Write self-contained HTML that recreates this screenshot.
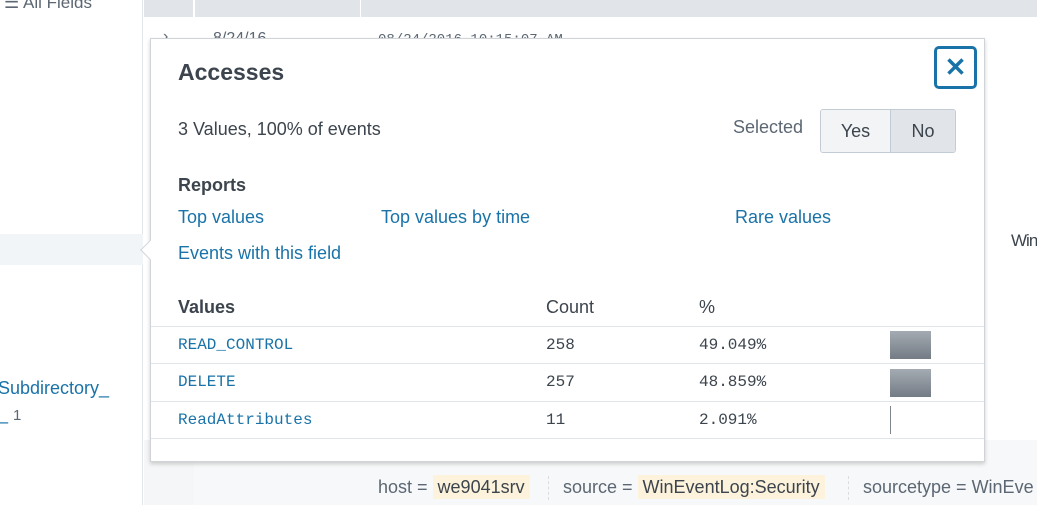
<!DOCTYPE html>
<html><head><style>
*{margin:0;padding:0;box-sizing:border-box}
body{width:1037px;height:505px;overflow:hidden;background:#fff;font-family:"Liberation Sans",sans-serif;position:relative;color:#3c444d}
.a{position:absolute;white-space:nowrap}
.mono{font-family:"Liberation Mono",monospace}
.link{color:#1a73a8}
.t{font-size:18px}
</style></head><body>
<div class="a" style="left:0;top:0;width:143px;height:505px;background:#fff;border-right:1px solid #e1e6eb"></div>
<div class="a" style="left:0;top:234px;width:143px;height:31px;background:#f2f5f7"></div>
<div class="a" style="left:4px;top:-7px;font-size:17px;color:#5c6773">☰ All Fields</div>
<div class="a link" style="left:-2px;top:378px;font-size:18px">Subdirectory_</div>
<div class="a" style="left:-2px;top:404px;font-size:18px;color:#1a73a8">_ <span style="color:#5c6773;font-size:15px">1</span></div>
<div class="a" style="left:144px;top:0;width:893px;height:17px;background:#e1e4e8"></div>
<div class="a" style="left:193px;top:0;width:2px;height:17px;background:#fff"></div>
<div class="a" style="left:360px;top:0;width:1px;height:17px;background:#fff"></div>
<div class="a" style="left:144px;top:440px;width:50px;height:65px;background:#f5f6f7"></div>
<div class="a" style="left:194px;top:440px;width:843px;height:65px;background:#f7f8f9"></div>
<div class="a" style="left:163px;top:28px;font-size:16px;color:#5c6773">›</div>
<div class="a" style="left:213px;top:30px;font-size:16px;color:#5c6773">8/24/16</div>
<div class="a mono" style="left:378px;top:32px;font-size:14px;color:#5c6773">08/24/2016 10:15:07 AM</div>
<div class="a" style="left:1011px;top:231px;font-size:17px;letter-spacing:-1px;color:#3c444d">WinEve</div>
<div class="a" style="left:378px;top:477px;font-size:18px;color:#5c6773">host = <span style="background:#fdf3dc;padding:2px 5px;color:#3c444d">we9041srv</span></div>
<div class="a" style="left:548px;top:476px;width:1px;height:24px;border-left:1px dashed #ddd"></div>
<div class="a" style="left:563px;top:477px;font-size:18px;color:#5c6773">source = <span style="background:#fdf3dc;padding:2px 5px;color:#3c444d">WinEventLog:Security</span></div>
<div class="a" style="left:848px;top:476px;width:1px;height:24px;border-left:1px dashed #ddd"></div>
<div class="a" style="left:863px;top:477px;font-size:18px;color:#5c6773">sourcetype = WinEve</div>
<div class="a" style="left:150px;top:38px;width:835px;height:424px;background:#fff;border:1px solid #d0d4d8;box-shadow:0 2px 4px rgba(0,0,0,.18)"></div>
<div class="a" style="left:143px;top:243px;width:14px;height:14px;background:#fff;border-left:1px solid #d0d4d8;border-bottom:1px solid #d0d4d8;transform:rotate(45deg)"></div>
<div class="a" style="left:178px;top:59px;font-size:23px;font-weight:bold;color:#3c444d">Accesses</div>
<div class="a" style="left:934px;top:46px;width:43px;height:43px;border:3px solid #1a73a8;border-radius:5px;text-align:center;line-height:36px;font-size:26px;color:#1a73a8;font-weight:bold">✕</div>
<div class="a t" style="left:178px;top:119px">3 Values, 100% of events</div>
<div class="a t" style="left:733px;top:117px;color:#5c6773">Selected</div>
<div class="a" style="left:820px;top:109px;width:136px;height:44px;border:1px solid #c3cbd4;border-radius:3px;overflow:hidden;display:flex;font-size:18px">
 <div style="width:70px;background:#f2f4f5;text-align:center;line-height:42px;border-right:1px solid #c3cbd4;color:#3c444d">Yes</div>
 <div style="flex:1;background:#e1e4e8;text-align:center;line-height:42px;color:#3c444d">No</div>
</div>
<div class="a t" style="left:178px;top:175px;font-weight:bold">Reports</div>
<div class="a link t" style="left:178px;top:207px">Top values</div>
<div class="a link t" style="left:381px;top:207px">Top values by time</div>
<div class="a link t" style="left:735px;top:207px">Rare values</div>
<div class="a link t" style="left:178px;top:243px">Events with this field</div>
<div class="a t" style="left:178px;top:297px;font-weight:bold">Values</div>
<div class="a t" style="left:546px;top:297px">Count</div>
<div class="a t" style="left:699px;top:297px">%</div>
<div class="a" style="left:151px;top:326px;width:833px;height:1px;background:#e1e6eb"></div>
<div class="a" style="left:151px;top:363px;width:833px;height:1px;background:#e1e6eb"></div>
<div class="a" style="left:151px;top:401px;width:833px;height:1px;background:#e1e6eb"></div>
<div class="a" style="left:151px;top:438px;width:833px;height:1px;background:#e1e6eb"></div>
<div class="a mono link" style="left:178px;top:336px;font-size:16px">READ_CONTROL</div>
<div class="a mono" style="left:546px;top:336px;font-size:16px">258</div>
<div class="a mono" style="left:699px;top:336px;font-size:16px">49.049%</div>
<div class="a" style="left:890px;top:331px;width:41px;height:28px;background:linear-gradient(#a4abb3,#737b84)"></div>
<div class="a mono link" style="left:178px;top:373px;font-size:16px">DELETE</div>
<div class="a mono" style="left:546px;top:373px;font-size:16px">257</div>
<div class="a mono" style="left:699px;top:373px;font-size:16px">48.859%</div>
<div class="a" style="left:890px;top:369px;width:41px;height:28px;background:linear-gradient(#a4abb3,#737b84)"></div>
<div class="a mono link" style="left:178px;top:411px;font-size:16px">ReadAttributes</div>
<div class="a mono" style="left:546px;top:411px;font-size:16px">11</div>
<div class="a mono" style="left:699px;top:411px;font-size:16px">2.091%</div>
<div class="a" style="left:890px;top:406px;width:1px;height:28px;background:#7d858e"></div>
</body></html>
